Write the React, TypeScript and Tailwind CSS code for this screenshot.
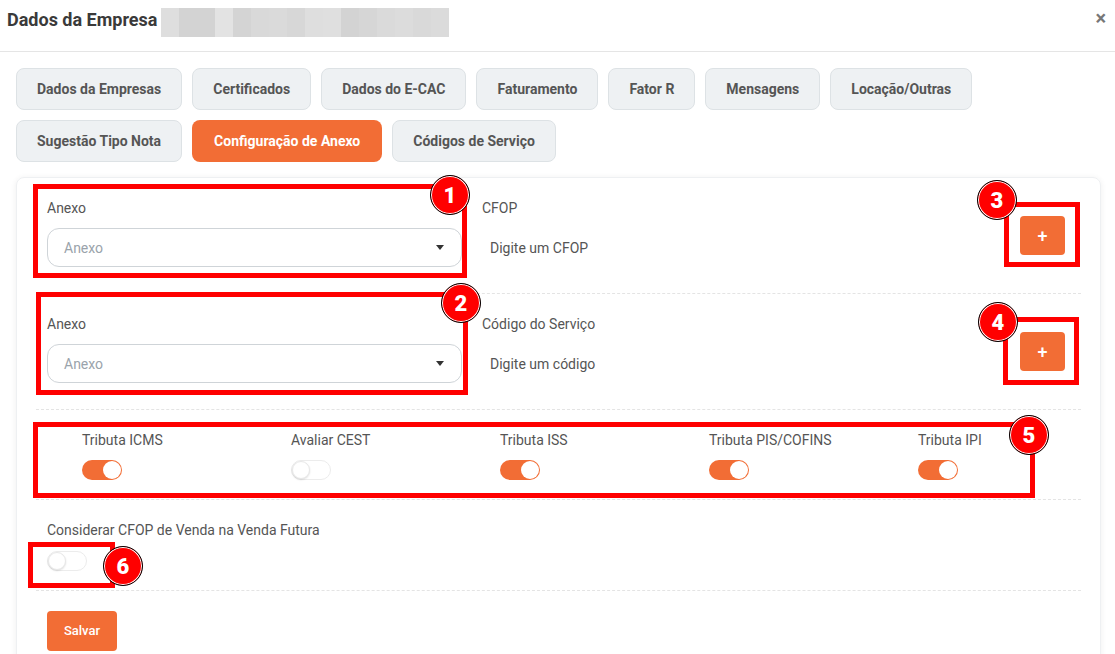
import React from "react";

const tabsTop = ["Dados da Empresas", "Certificados", "Dados do E-CAC", "Faturamento", "Fator R", "Mensagens", "Locação/Outras"];
const tabsBottom = ["Sugestão Tipo Nota", "Configuração de Anexo", "Códigos de Serviço"];

// blurred company name
const mosaic = ["#dedede", "#d3d3d3", "#d3d3d3", "#e3e3e3", "#d4d4d4", "#d9d9d9", "#dadada", "#d7d7d7", "#dedede", "#dfdfdf", "#d3d3d3", "#d6d6d6", "#dadada", "#dcdcdc", "#d9d9d9", "#dbdbdb"];

const taxes = [
  { label: "Tributa ICMS", on: true },
  { label: "Avaliar CEST", on: false },
  { label: "Tributa ISS", on: true },
  { label: "Tributa PIS/COFINS", on: true },
  { label: "Tributa IPI", on: true },
];

function Toggle({ on }: { on: boolean }) {
  if (on) {
    return (
      <div className="relative h-5 w-10 rounded-full bg-[#f26d35]">
        <span className="absolute right-[1px] top-[1px] h-[18px] w-[18px] rounded-full bg-white" />
      </div>
    );
  }
  return (
    <div className="relative h-5 w-10 rounded-full border border-[#ececec] bg-white">
      <span className="absolute left-0 top-0 h-[18px] w-[18px] rounded-full border border-[#e8e8e8] bg-white shadow-[0_1px_2px_rgba(0,0,0,0.12)]" />
    </div>
  );
}

function Select() {
  return (
    <div className="mt-[10px] flex h-[39px] w-[415px] items-center justify-between rounded-xl border border-[#cfd4d8] pl-4 pr-[17px]">
      <span className="text-sm text-[#9aa3ab]">Anexo</span>
      <span className="h-0 w-0 border-x-[4px] border-t-[5px] border-x-transparent border-t-[#333]" />
    </div>
  );
}

function PlusButton() {
  return (
    <button className="mr-4 mt-[18px] flex h-[39px] w-[45px] items-center justify-center self-start rounded bg-[#f26d35] text-lg font-medium text-white">
      +
    </button>
  );
}

function Badge({ n, x, y }: { n: number; x: number; y: number }) {
  return (
    <div
      className="absolute flex h-10 w-10 items-center justify-center rounded-full border-[1.5px] border-black bg-[#ff0000] text-[22px] font-black text-white shadow-[inset_0_0_0_1px_#fff]"
      style={{ left: x - 20, top: y - 20 }}
    >
      {n}
    </div>
  );
}

function Box({ x, y, w, h }: { x: number; y: number; w: number; h: number }) {
  return <div className="absolute border-[5px] border-[#ff0000]" style={{ left: x, top: y, width: w, height: h }} />;
}

export default function App() {
  return (
    <div className="relative h-[654px] overflow-hidden bg-white font-['Roboto',sans-serif] text-[#555]">
      {/* header */}
      <div className="flex h-[52px] items-start border-b border-[#e5e5e5] pl-[7px] pr-[9px] pt-[6px]">
        <h1 className="text-[18px] font-bold leading-7 text-[#3a3a3a]">Dados da Empresa</h1>
        <div className="ml-[4px] mt-[2px] flex h-[29px]">
          {mosaic.map((c, i) => (
            <div key={i} className="h-full w-[18px]" style={{ background: c }} />
          ))}
        </div>
        <span className="ml-auto mt-[2px] text-[20px] font-bold leading-5 text-[#777]">×</span>
      </div>

      {/* tabs */}
      <div className="flex flex-col gap-[10px] px-4 pt-4">
        <div className="flex gap-[10px]">
          {tabsTop.map((t) => (
            <div key={t} className="flex h-[42px] items-center rounded-lg border border-[#dde2e5] bg-[#eef1f3] px-5 text-sm font-bold text-[#555]">
              {t}
            </div>
          ))}
        </div>
        <div className="flex gap-[10px]">
          {tabsBottom.map((t) => {
            const active = t === "Configuração de Anexo";
            return (
              <div
                key={t}
                className={
                  active
                    ? "flex h-[42px] items-center rounded-lg bg-[#f26d35] px-[22px] text-sm font-bold text-white"
                    : "flex h-[42px] items-center rounded-lg border border-[#dde2e5] bg-[#eef1f3] px-5 text-sm font-bold text-[#555]"
                }
              >
                {t}
              </div>
            );
          })}
        </div>
      </div>

      {/* card */}
      <div className="ml-4 mr-[14px] mt-[15px] rounded-lg border border-[#eef0f2] px-[19px] shadow-[0_1px_6px_rgba(0,0,0,0.07)]">
        <div className="flex border-b border-dashed border-[#e4e4e4] pb-[26px] pt-5">
          <div className="w-[435px] px-[11px]">
            <div className="text-sm leading-5">Anexo</div>
            <Select />
          </div>
          <div className="flex-1 px-[11px]">
            <div className="text-sm leading-5">CFOP</div>
            <div className="mt-[10px] flex h-[39px] items-center pl-2 text-sm">Digite um CFOP</div>
          </div>
          <PlusButton />
        </div>

        <div className="flex border-b border-dashed border-[#e4e4e4] pb-[26px] pt-5">
          <div className="w-[435px] px-[11px]">
            <div className="text-sm leading-5">Anexo</div>
            <Select />
          </div>
          <div className="flex-1 px-[11px]">
            <div className="text-sm leading-5">Código do Serviço</div>
            <div className="mt-[10px] flex h-[39px] items-center pl-2 text-sm">Digite um código</div>
          </div>
          <PlusButton />
        </div>

        <div className="grid grid-cols-5 border-b border-dashed border-[#e4e4e4] pb-[19px] pt-5">
          {taxes.map((t) => (
            <div key={t.label} className="pl-[46px]">
              <div className="text-sm leading-5">{t.label}</div>
              <div className="mt-[10px]">
                <Toggle on={t.on} />
              </div>
            </div>
          ))}
        </div>

        <div className="border-b border-dashed border-[#e4e4e4] px-[11px] pb-[19px] pt-5">
          <div className="text-sm leading-5">Considerar CFOP de Venda na Venda Futura</div>
          <div className="mt-[11px]">
            <Toggle on={false} />
          </div>
        </div>

        <div className="px-[11px] pb-6 pt-5">
          <button className="h-10 w-[70px] rounded bg-[#f26d35] text-[13px] font-medium text-white">Salvar</button>
        </div>
      </div>

      {/* annotations */}
      <Box x={33} y={184} w={434} h={94} />
      <Box x={36} y={292} w={432} h={103} />
      <Box x={1004} y={202} w={76} h={65} />
      <Box x={1003} y={317} w={76} h={68} />
      <Box x={33} y={422} w={1002} h={76} />
      <Box x={28} y={542} w={87} h={46} />
      <Badge n={1} x={450} y={195} />
      <Badge n={2} x={461} y={303} />
      <Badge n={3} x={997} y={200} />
      <Badge n={4} x={998} y={322} />
      <Badge n={5} x={1029} y={435} />
      <Badge n={6} x={123} y={566} />
    </div>
  );
}
